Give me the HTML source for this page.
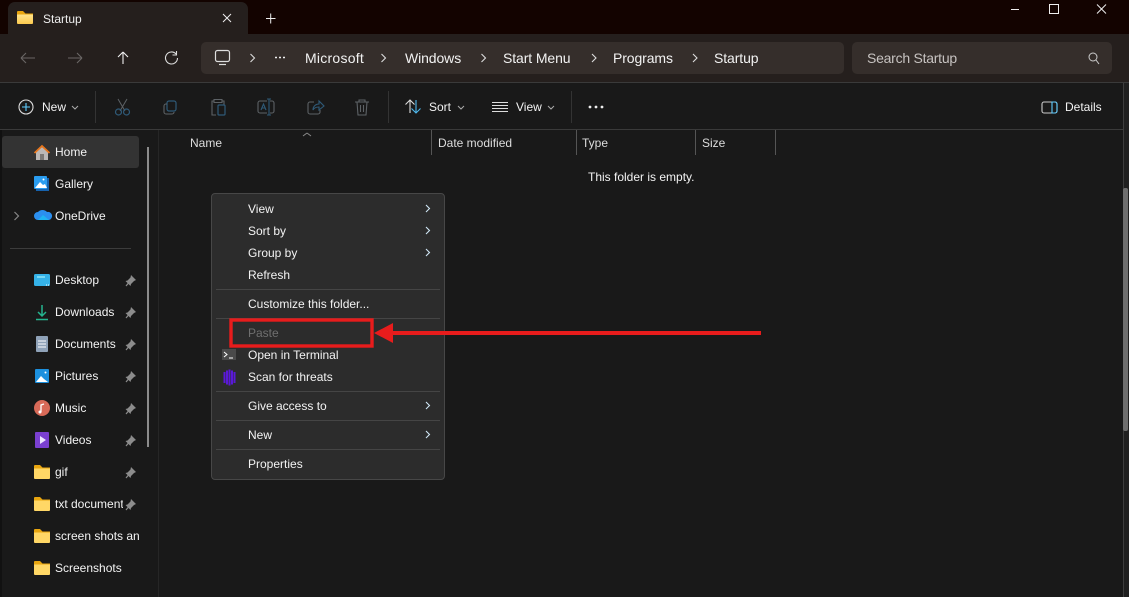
<!DOCTYPE html>
<html><head><meta charset="utf-8">
<style>
html,body{margin:0;padding:0;background:#191919;}
#r{position:relative;width:1129px;height:597px;overflow:hidden;background:#191919;font-family:"Liberation Sans",sans-serif;color:#f2f2f2;font-size:12px;}
.a{position:absolute;}
.t{position:absolute;white-space:nowrap;line-height:16px;}
.b{font-size:14px;line-height:18px;letter-spacing:-.1px;}
.m{font-size:12px;color:#f3f3f3;letter-spacing:0;}
svg{position:absolute;overflow:visible;}
</style></head><body><div id="r">
<!-- title -->
<div class="a" style="left:0;top:0;width:1129px;height:34px;background:#130300"></div>
<div class="a" style="left:8px;top:2px;width:240px;height:33px;background:#251f1d;border-radius:7px 7px 0 0"></div>
<div class="a" style="left:0;top:34px;width:1129px;height:48px;background:#251f1d"></div>
<div class="a" style="left:0;top:82px;width:1129px;height:1px;background:#3a3a3a"></div>
<svg style="left:0;top:0" width="1129" height="82" fill="none">
<defs><linearGradient id="g" x1="0" y1="0" x2="0" y2="1"><stop offset="0" stop-color="#ffe58f"/><stop offset="1" stop-color="#fcc94e"/></linearGradient></defs>
<path d="M17 14h6l2 0h8v9a1 1 0 0 1-1 1h-14a1 1 0 0 1-1-1z" fill="url(#g)"/><path d="M17 12a1 1 0 0 1 1-1h5l2.500 2.500h7.500v1h-16z" fill="#e8a50f"/>
<path d="M223 14l8 8M231 14l-8 8M266 18.500h9.500M270.700 13.500v10M1011 9.500h8M1049.500 4.500h9v9h-9zM1097 4.500l9 9M1106 4.500l-9 9" stroke="#eee" stroke-width="1"/>
<path d="M21 58h14M21 58l5-5M21 58l5 5M82 58h-14M82 58l-5-5M82 58l-5 5" stroke="#6a6665" stroke-width="1.100"/>
<path d="M123 64v-12M123 52l-5 5M123 52l5 5" stroke="#eee" stroke-width="1.100"/>
<path d="M176 54a6 6 0 1 0 1.500 4M176.500 51v4h-4" stroke="#ddd" stroke-width="1.100"/>
</svg>
<div class="t" style="left:43px;top:11px;font-size:12px;color:#eee">Startup</div>
<!-- address -->
<div class="a" style="left:201px;top:42px;width:643px;height:32px;background:#352e2b;border-radius:5px"></div>
<div class="a" style="left:852px;top:42px;width:260px;height:32px;background:#352e2b;border-radius:5px"></div>
<svg style="left:0;top:0" width="1129" height="82" fill="none">
<rect x="215.500" y="50.500" width="14" height="11" rx="2" stroke="#ddd" stroke-width="1.200"/><path d="M219 64.500h7" stroke="#ddd" stroke-width="1.200"/>
<path d="M250.500 54l4 4-4 4M381.500 54l4 4-4 4M481.500 54l4 4-4 4M592 54l4 4-4 4M693 54l4 4-4 4" stroke="#ddd" stroke-width="1.100"/>
<path d="M275 57.500h2M279 57.500h2M283 57.500h2" stroke="#eee" stroke-width="1.600"/>
<circle cx="1093" cy="57" r="4" stroke="#ccc"/><path d="M1096 60l3 4" stroke="#ccc"/>
</svg>
<div class="t b" style="left:305px;top:49px;letter-spacing:.25px">Microsoft</div>
<div class="t b" style="left:405px;top:49px">Windows</div>
<div class="t b" style="left:503px;top:49px">Start Menu</div>
<div class="t b" style="left:613px;top:49px">Programs</div>
<div class="t b" style="left:714px;top:49px">Startup</div>
<div class="t b" style="left:867px;top:49px;color:#c6c2c0;letter-spacing:-.25px">Search Startup</div>
<!-- toolbar -->
<div class="a" style="left:95px;top:91px;width:1px;height:32px;background:#333"></div>
<div class="a" style="left:388px;top:91px;width:1px;height:32px;background:#333"></div>
<div class="a" style="left:571px;top:91px;width:1px;height:32px;background:#333"></div>
<div class="a" style="left:0;top:129px;width:1125px;height:1px;background:#3a3a3a"></div>
<svg style="left:0;top:0" width="1129" height="130" fill="none">
<circle cx="26" cy="107" r="7" stroke="#ddd" stroke-width="1.100"/><path d="M22 107h8M26 103v8" stroke="#60cdff" stroke-width="1.100"/>
<path d="M72 106l3 3 3-3M458 106l3 3 3-3M548 106l3 3 3-3" stroke="#aaa"/>
<path d="M118 99l7 12M127 99l-7 12" stroke="#5d6266"/><circle cx="118.500" cy="112" r="3" stroke="#2f5a78" stroke-width="1.200"/><circle cx="126.500" cy="112" r="3" stroke="#2f5a78" stroke-width="1.200"/>
<rect x="167" y="101" width="9" height="10" rx="2" stroke="#2f5a78" stroke-width="1.200"/><path d="M167 104h-1a2 2 0 0 0-2 2v6a2 2 0 0 0 2 2h6a2 2 0 0 0 2-2" stroke="#5d6266" stroke-width="1.100"/>
<path d="M214 101h-2v14h4M222 101h2v4M214 99.500h8v3h-8z" stroke="#5d6266" stroke-width="1.100"/><rect x="218" y="105" width="7" height="10" rx="1" stroke="#2f5a78" stroke-width="1.200"/>
<path d="M267 101h-7a2 2 0 0 0-2 2v8a2 2 0 0 0 2 2h7M270 101h2a2 2 0 0 1 2 2v8a2 2 0 0 1-2 2h-2" stroke="#5d6266" stroke-width="1.100"/><path d="M269 99v16M267 99h4M267 115h4M261 110l2.500-6 2.500 6M262 108h3" stroke="#2f5a78" stroke-width="1.100"/>
<path d="M314 102h-4a2 2 0 0 0-2 2v8a2 2 0 0 0 2 2h8a2 2 0 0 0 2-2v-2" stroke="#5d6266" stroke-width="1.100"/><path d="M313 110c0-4 3-6 6-6v-3l5 5-5 4v-3c-3 0-5 1-6 3z" stroke="#2f5a78" stroke-width="1.100"/>
<path d="M355 102h14M359 102v-2h6v2M357 102l1 13h8l1-13M360.500 105v7M363.500 105v7" stroke="#5d6266" stroke-width="1.100"/>
<path d="M410 113v-13M405.500 104.500l4.500-4.500 4.500 4.500" stroke="#ddd" stroke-width="1.100"/><path d="M416 100v13M411.500 108.500l4.500 4.500 4.500-4.500" stroke="#4fb9ee" stroke-width="1.100"/>
<path d="M492 102.500h16M492 105.500h16M492 108.500h16M492 111.500h16" stroke="#ddd"/>
<circle cx="590" cy="107" r="1.400" fill="#eee"/><circle cx="596" cy="107" r="1.400" fill="#eee"/><circle cx="602" cy="107" r="1.400" fill="#eee"/>
<rect x="1042" y="102" width="15" height="11" rx="2" stroke="#ccc" stroke-width="1.100"/><path d="M1052 102h3a2 2 0 0 1 2 2v7a2 2 0 0 1-2 2h-3z" stroke="#60cdff" stroke-width="1.100"/>
<path d="M307 133l-4 3M307 133l4 3" stroke="#8a8a8a"/>
</svg>
<div class="t m" style="left:42px;top:99px">New</div>
<div class="t m" style="left:429px;top:99px">Sort</div>
<div class="t m" style="left:516px;top:99px">View</div>
<div class="t m" style="left:1065px;top:99px">Details</div>
<!-- headers -->
<div class="t m" style="left:190px;top:135px;color:#ddd">Name</div>
<div class="t m" style="left:438px;top:135px;color:#ddd">Date modified</div>
<div class="t m" style="left:582px;top:135px;color:#ddd">Type</div>
<div class="t m" style="left:702px;top:135px;color:#ddd">Size</div>
<div class="a" style="left:431px;top:130px;width:1px;height:25px;background:#555"></div>
<div class="a" style="left:576px;top:130px;width:1px;height:25px;background:#555"></div>
<div class="a" style="left:695px;top:130px;width:1px;height:25px;background:#555"></div>
<div class="a" style="left:775px;top:130px;width:1px;height:25px;background:#555"></div>
<div class="t m" style="left:588px;top:169px">This folder is empty.</div>
<!-- edges -->
<div class="a" style="left:158px;top:130px;width:1px;height:467px;background:#262626"></div>
<div class="a" style="left:1123px;top:83px;width:1px;height:514px;background:#3d3d3d"></div>
<div class="a" style="left:1124px;top:83px;width:5px;height:514px;background:#202020"></div>
<div class="a" style="left:1123px;top:188px;width:5px;height:243px;background:#6e6e6e;border-radius:2px"></div>
<div class="a" style="left:0;top:130px;width:2px;height:467px;background:#111"></div>
<!-- sidebar -->
<div class="a" style="left:2px;top:136px;width:137px;height:32px;background:#333;border-radius:3px"></div>
<div class="a" style="left:147px;top:147px;width:2px;height:300px;background:#8c8c8c"></div>
<div class="a" style="left:10px;top:248px;width:121px;height:1px;background:#3c3c3c"></div>
<svg style="left:0;top:130px" width="160" height="467" fill="none" viewBox="0 130 160 467">
<path d="M14.500 212l4 4-4 4" stroke="#888" stroke-width="1.200"/>
<path d="M36 152v8h12v-8l-6-5z" fill="#bcb8b6"/><path d="M34.500 153l7.500-7 7.500 7" stroke="#e8761c" stroke-width="1.800"/><rect x="40" y="154" width="4" height="6" fill="#7c7875"/>
<rect x="36" y="178" width="13" height="13" fill="#1662ad"/><rect x="34" y="176" width="13" height="13" rx="1" fill="#2a9df0"/><path d="M35 188l5-6 3 3 2-1 2 4z" fill="#fff"/><circle cx="43.500" cy="179.500" r="1" fill="#fff"/>
<path d="M38 220a4 4 0 0 1 0-8 6 6 0 0 1 9 0 4 4 0 0 1 2 8z" fill="#2b8fef"/><path d="M38 220l5-5 6 5z" fill="#1fb4f2"/>
<rect x="34" y="274" width="16" height="12" rx="1.500" fill="#35b2e8"/><path d="M37 277h8" stroke="#bff" /><path d="M46 285h1M48 285h1" stroke="#fff"/>
<path d="M42 305v11M38 312l4 4 4-4" stroke="#25b48f" stroke-width="1.500"/><path d="M36 319.500h12" stroke="#25b48f" stroke-width="1.500"/>
<rect x="36" y="336" width="12" height="16" rx="1" fill="#8fa2b8"/><path d="M38 341h8M38 344h8M38 347h8" stroke="#fff"/>
<rect x="35" y="369" width="14" height="14" rx="1" fill="#1c90de"/><path d="M36 382l5-6 3 3 4 3z" fill="#fff"/><circle cx="45.500" cy="372.500" r="1" fill="#fff"/>
<circle cx="42" cy="408" r="8" fill="#d86a58"/><path d="M41 412v-7l3-1" stroke="#fff" stroke-width="1.300"/><circle cx="40" cy="412" r="1.500" fill="#fff"/>
<rect x="35" y="432" width="14" height="16" rx="1" fill="#7a3fd0"/><path d="M40 436v8l6-4z" fill="#ece4ff"/>
<g id="f"><path d="M34 468h16v10a1 1 0 0 1-1 1h-14a1 1 0 0 1-1-1z" fill="#ffd766"/><path d="M34 466a1 1 0 0 1 1-1h5l2.500 2.500h7.500v1h-16z" fill="#e8a50f"/></g>
<use href="#f" y="32"/><use href="#f" y="64"/><use href="#f" y="96"/>
<g id="p" fill="#8c8c8c"><path d="M131 275l5 5-2 1-3 3-.5 2-5-5 2-.5 3-3z"/><path d="M128.500 283l-2.500 3" stroke="#8c8c8c" stroke-width="1.200"/></g>
<use href="#p" y="32"/><use href="#p" y="64"/><use href="#p" y="96"/><use href="#p" y="128"/><use href="#p" y="160"/><use href="#p" y="192"/><use href="#p" y="224"/>
</svg>
<div class="t m" style="left:55px;top:144px">Home</div>
<div class="t m" style="left:55px;top:176px">Gallery</div>
<div class="t m" style="left:55px;top:208px">OneDrive</div>
<div class="t m" style="left:55px;top:272px">Desktop</div>
<div class="t m" style="left:55px;top:304px">Downloads</div>
<div class="t m" style="left:55px;top:336px">Documents</div>
<div class="t m" style="left:55px;top:368px">Pictures</div>
<div class="t m" style="left:55px;top:400px">Music</div>
<div class="t m" style="left:55px;top:432px">Videos</div>
<div class="t m" style="left:55px;top:464px">gif</div>
<div class="t m" style="left:55px;top:496px;width:68px;overflow:hidden">txt documents</div>
<div class="t m" style="left:55px;top:528px;width:84px;overflow:hidden">screen shots and</div>
<div class="t m" style="left:55px;top:560px">Screenshots</div>
<!-- menu -->
<div class="a" style="left:211px;top:193px;width:232px;height:285px;background:#2c2c2c;border:1px solid #474747;border-radius:4px"></div>
<div class="a" style="left:216px;top:289px;width:224px;height:1px;background:#454545"></div>
<div class="a" style="left:216px;top:318px;width:224px;height:1px;background:#454545"></div>
<div class="a" style="left:216px;top:391px;width:224px;height:1px;background:#454545"></div>
<div class="a" style="left:216px;top:420px;width:224px;height:1px;background:#454545"></div>
<div class="a" style="left:216px;top:449px;width:224px;height:1px;background:#454545"></div>
<div class="t m" style="left:248px;top:201px">View</div>
<div class="t m" style="left:248px;top:223px">Sort by</div>
<div class="t m" style="left:248px;top:245px">Group by</div>
<div class="t m" style="left:248px;top:267px">Refresh</div>
<div class="t m" style="left:248px;top:296px">Customize this folder...</div>
<div class="t m" style="left:248px;top:325px;color:#6f6f6f">Paste</div>
<div class="t m" style="left:248px;top:347px">Open in Terminal</div>
<div class="t m" style="left:248px;top:369px">Scan for threats</div>
<div class="t m" style="left:248px;top:398px">Give access to</div>
<div class="t m" style="left:248px;top:427px">New</div>
<div class="t m" style="left:248px;top:456px">Properties</div>
<svg style="left:0;top:0" width="1129" height="597" fill="none">
<path d="M426 205l3.500 3.500-3.500 3.500M426 227l3.500 3.500-3.500 3.500M426 249l3.500 3.500-3.500 3.500M426 402l3.500 3.500-3.500 3.500M426 431l3.500 3.500-3.500 3.500" stroke="#cfe6f5" stroke-width="1.100"/>
<rect x="222" y="349" width="14" height="11" fill="#4a4a4a"/><path d="M224 352l3 2.500-3 2.500M229 358h4" stroke="#fff"/>
<path d="M224.500 372v11M227 370.500v14M229.500 369.500v16M232 370.500v14M234.500 372v11" stroke="#5a19d8" stroke-width="2"/>
<rect x="231" y="320" width="141" height="26" stroke="#e81c1c" stroke-width="3.400"/>
<path d="M374 333l19-10v20z" fill="#e81c1c"/><path d="M390 333h371" stroke="#e81c1c" stroke-width="4"/>
</svg>
</div></body></html>
